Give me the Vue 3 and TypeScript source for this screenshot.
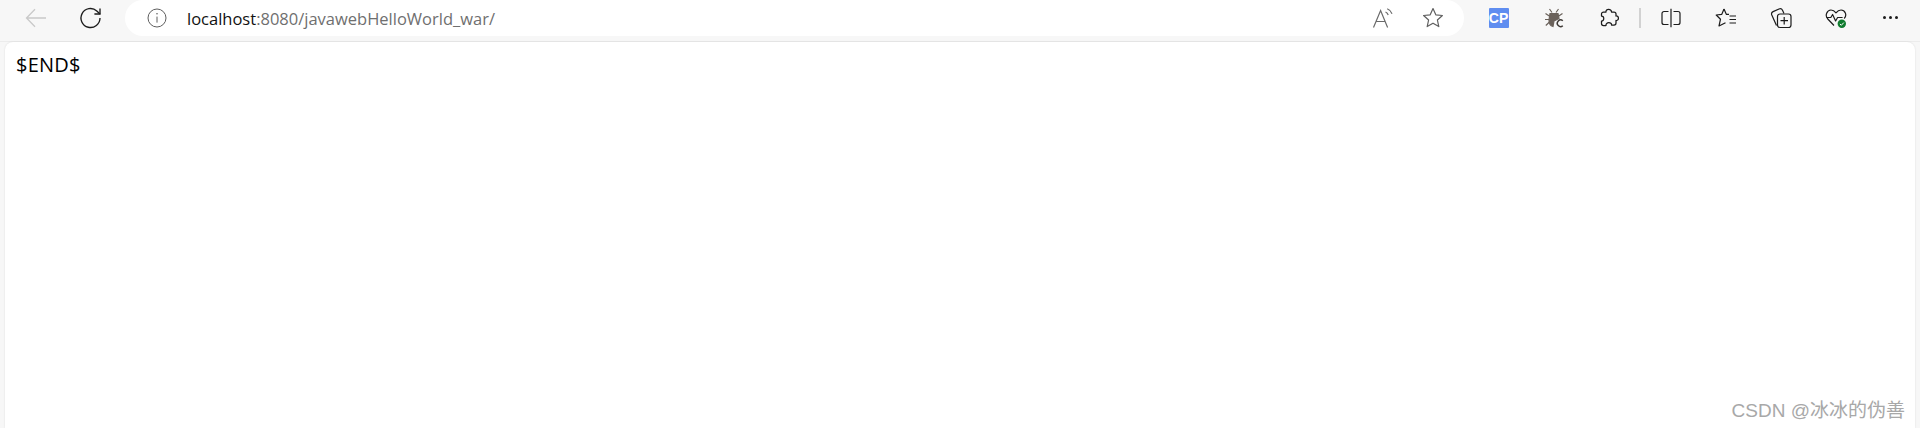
<template>
  <div class="browser">
    <header class="toolbar">
      <div class="nav">
        <button class="tool disabled" aria-label="back">
          <svg viewBox="0 0 24 24" width="24" height="24" fill="none" stroke="#c9c9c9" stroke-width="1.3">
            <path d="M22 12H2.500M11 3.200 2.500 12l8.500 8.800" />
          </svg>
        </button>
        <button class="tool" aria-label="refresh">
          <svg viewBox="0 0 24 24" width="24" height="24" fill="none" stroke="#1c1c1c" stroke-width="1.35">
            <path d="M21 12a9.500 9.500 0 1 1-3.200-7.100L21 8" />
            <path d="M21 2.500V8h-5.600" />
          </svg>
        </button>
      </div>

      <div class="address">
        <svg class="info" viewBox="0 0 20 20" width="20" height="20" fill="none" stroke="#5f5f5f" stroke-width="1">
          <circle cx="10" cy="10" r="9" />
          <path d="M10 8.600v6" />
          <circle cx="10" cy="5.800" r=".8" fill="#5f5f5f" stroke="none" />
        </svg>
        <span class="url"><span class="host">localhost</span>:8080/javawebHelloWorld_war/</span>
        <div class="address-actions">
          <svg viewBox="0 0 22 22" width="22" height="22" fill="none" stroke="#6a6a6a" stroke-width="1.2">
            <path d="M1.500 20.500 8.600 3.500l7 17M4.200 14.500h9" />
            <path d="M13.500 5c1.300.5 2.200 1.500 2.700 3M15.200 1.800c2.400.9 4 2.700 4.800 5" />
          </svg>
          <svg viewBox="0 0 22 22" width="22" height="22" fill="none" stroke="#5f5f5f" stroke-width="1.2" stroke-linejoin="round">
            <path d="m11 1.600 2.800 6.200 6.600.7-5 4.500 1.400 6.600-5.800-3.400-5.800 3.400 1.400-6.600-5-4.500 6.600-.7Z" />
          </svg>
        </div>
      </div>

      <div class="extensions">
        <button class="tool">
          <span class="cp">CP</span>
        </button>
        <button class="tool">
          <svg viewBox="0 0 20 20" width="20" height="20" fill="none" stroke="#6b625b" stroke-width="1.2">
            <path d="M5.500 1 8 4.500M14.500 1 12 4.500M1.500 5.500 6 8.500M18.500 5.500 14 8.500M1 11.500h4M1.800 17.500 6 13.500" />
            <path d="M6 5.500h8l1 5-5 2.500-1 5.500c-2-.5-4-3-4-6.500Z" fill="#6b625b" />
            <path d="M18.800 12.800a3.300 3.300 0 1 0 0 5" stroke="#3f3a36" stroke-width="1.500" />
          </svg>
        </button>
        <button class="tool">
          <svg viewBox="0 0 20 20" width="20" height="20" fill="none" stroke="#1c1c1c" stroke-width="1.25" stroke-linejoin="round">
            <path d="M7 4C6.500 .6 12.500 .2 12.500 4H15a2 2 0 0 1 2 2v2c3.200-.6 3.200 5 0 4.500V15a2 2 0 0 1-2 2h-2.500c.6-3.200-6-3.200-5.500.5H4.500a2 2 0 0 1-2-2V13c3-.2 3-5 0-5V6a2 2 0 0 1 2-2Z" />
          </svg>
        </button>
        <i class="separator"></i>
        <button class="tool">
          <svg viewBox="0 0 20 20" width="20" height="20" fill="none" stroke="#1c1c1c" stroke-width="1.2">
            <path d="M7.500 3.500H3a2 2 0 0 0-2 2v9a2 2 0 0 0 2 2h4.500M12.500 3.500H17a2 2 0 0 1 2 2v9a2 2 0 0 1-2 2h-4.500M10 .8v18.400" />
          </svg>
        </button>
        <button class="tool">
          <svg viewBox="0 0 22 22" width="22" height="22" fill="none" stroke="#1c1c1c" stroke-width="1.2" stroke-linejoin="round">
            <path d="M9 2 6.800 7.300 1.200 8l4.300 4.200L4 19l6.500-3.300" />
            <path d="m9 2 2.300 5.300H14M14.500 9H21M14.500 12.500H21M14.500 16H21" />
          </svg>
        </button>
        <button class="tool">
          <svg viewBox="0 0 22 22" width="22" height="22" fill="none" stroke="#1c1c1c" stroke-width="1.2" stroke-linejoin="round">
            <path d="M6.500 18.500 1.800 8c-.6-1.500 0-2.800 1.300-3.400L9 2c1.500-.6 2.800-.2 3.500 1.200L14 6.500" />
            <rect x="7.500" y="7" width="13.500" height="13.500" rx="2.500" />
            <path d="M14.200 10v7.500M10.500 13.700h7.500" />
          </svg>
        </button>
        <button class="tool health">
          <svg viewBox="0 0 22 22" width="22" height="22" fill="none" stroke="#1c1c1c" stroke-width="1.2" stroke-linejoin="round">
            <path d="M9 18.500 2.800 12C-.5 8.500 2 3 6 3c2 0 3.600 1 5 2.800C12.400 4 14 3 16 3c4 0 6.500 5 3.200 8.500" />
            <path d="M1.500 10.500h4.300l1.800-3 3 6.500 2-3.500h5" />
            <circle cx="16.800" cy="16.800" r="4.200" fill="#0f7b2e" stroke="none" />
            <path d="m14.900 16.900 1.400 1.400 2.500-2.700" stroke="#fff" stroke-width="1" />
          </svg>
        </button>
        <button class="tool more" aria-label="more">
          <i></i><i></i><i></i>
        </button>
      </div>
    </header>

    <main class="page">
      <p class="content">$END$</p>
      <span class="watermark">CSDN @冰冰的伪善</span>
    </main>
  </div>
</template>

<script setup lang="ts">
</script>

<style>
html,
body {
  margin: 0;
  background: #f7f7f7;
}
</style>

<style scoped>
.browser {
  width: 1920px;
  height: 428px;
  display: flex;
  flex-direction: column;
  overflow: hidden;
  background: #f7f7f7;
  font-family: "Open Sans", "Noto Sans CJK SC", sans-serif;
}

.toolbar {
  height: 42px;
  flex: none;
  display: flex;
  align-items: flex-start;
  box-sizing: border-box;
  border-bottom: 1px solid #ececec;
}

.tool {
  width: 55px;
  height: 35px;
  flex: none;
  padding: 0;
  border: 0;
  background: none;
  display: flex;
  align-items: center;
  justify-content: center;
}

.nav {
  display: flex;
  flex: none;
  padding-left: 8px;
  width: 125px;
  box-sizing: border-box;
}

.address {
  width: 1339px;
  height: 36px;
  flex: none;
  box-sizing: border-box;
  padding: 0 20px 0 22px;
  display: flex;
  align-items: center;
  background: #fff;
  border-radius: 18px;
}

.info {
  flex: none;
}

.url {
  margin-left: 20px;
  font-size: 16.5px;
  color: #6f6f6f;
  white-space: nowrap;
}

.host {
  color: #111;
}

.address-actions {
  margin-left: auto;
  display: flex;
  gap: 28px;
}

.extensions {
  display: flex;
  flex: none;
  align-items: flex-start;
  margin-left: 7px;
}

.cp {
  width: 20px;
  height: 20px;
  border-radius: 1px;
  background: #5f8df0;
  color: #fff;
  font-family: "Liberation Sans", sans-serif;
  font-weight: 700;
  font-size: 14px;
  line-height: 20px;
  text-align: center;
}

.separator {
  width: 2px;
  height: 20px;
  margin: 8px 2px 0 3px;
  flex: none;
  background: #d2d2d2;
}

.more {
  gap: 3px;
}

.more i {
  width: 3px;
  height: 3px;
  border-radius: 50%;
  background: #1c1c1c;
}

.page {
  flex: 1;
  position: relative;
  margin: 0 5px;
  background: #fff;
  border-radius: 8px 8px 0 0;
  box-shadow: 0 0 2px rgba(0, 0, 0, 0.12);
}

.content {
  margin: 0;
  padding: 10px 11px;
  font-size: 20px;
  letter-spacing: 0.2px;
  line-height: 26px;
  color: #000;
}

.watermark {
  position: absolute;
  right: 10px;
  bottom: 5px;
  font-family: "Liberation Sans", "Noto Sans CJK SC", sans-serif;
  font-size: 19px;
  line-height: 24px;
  color: #a8a8a8;
  white-space: nowrap;
}
</style>
